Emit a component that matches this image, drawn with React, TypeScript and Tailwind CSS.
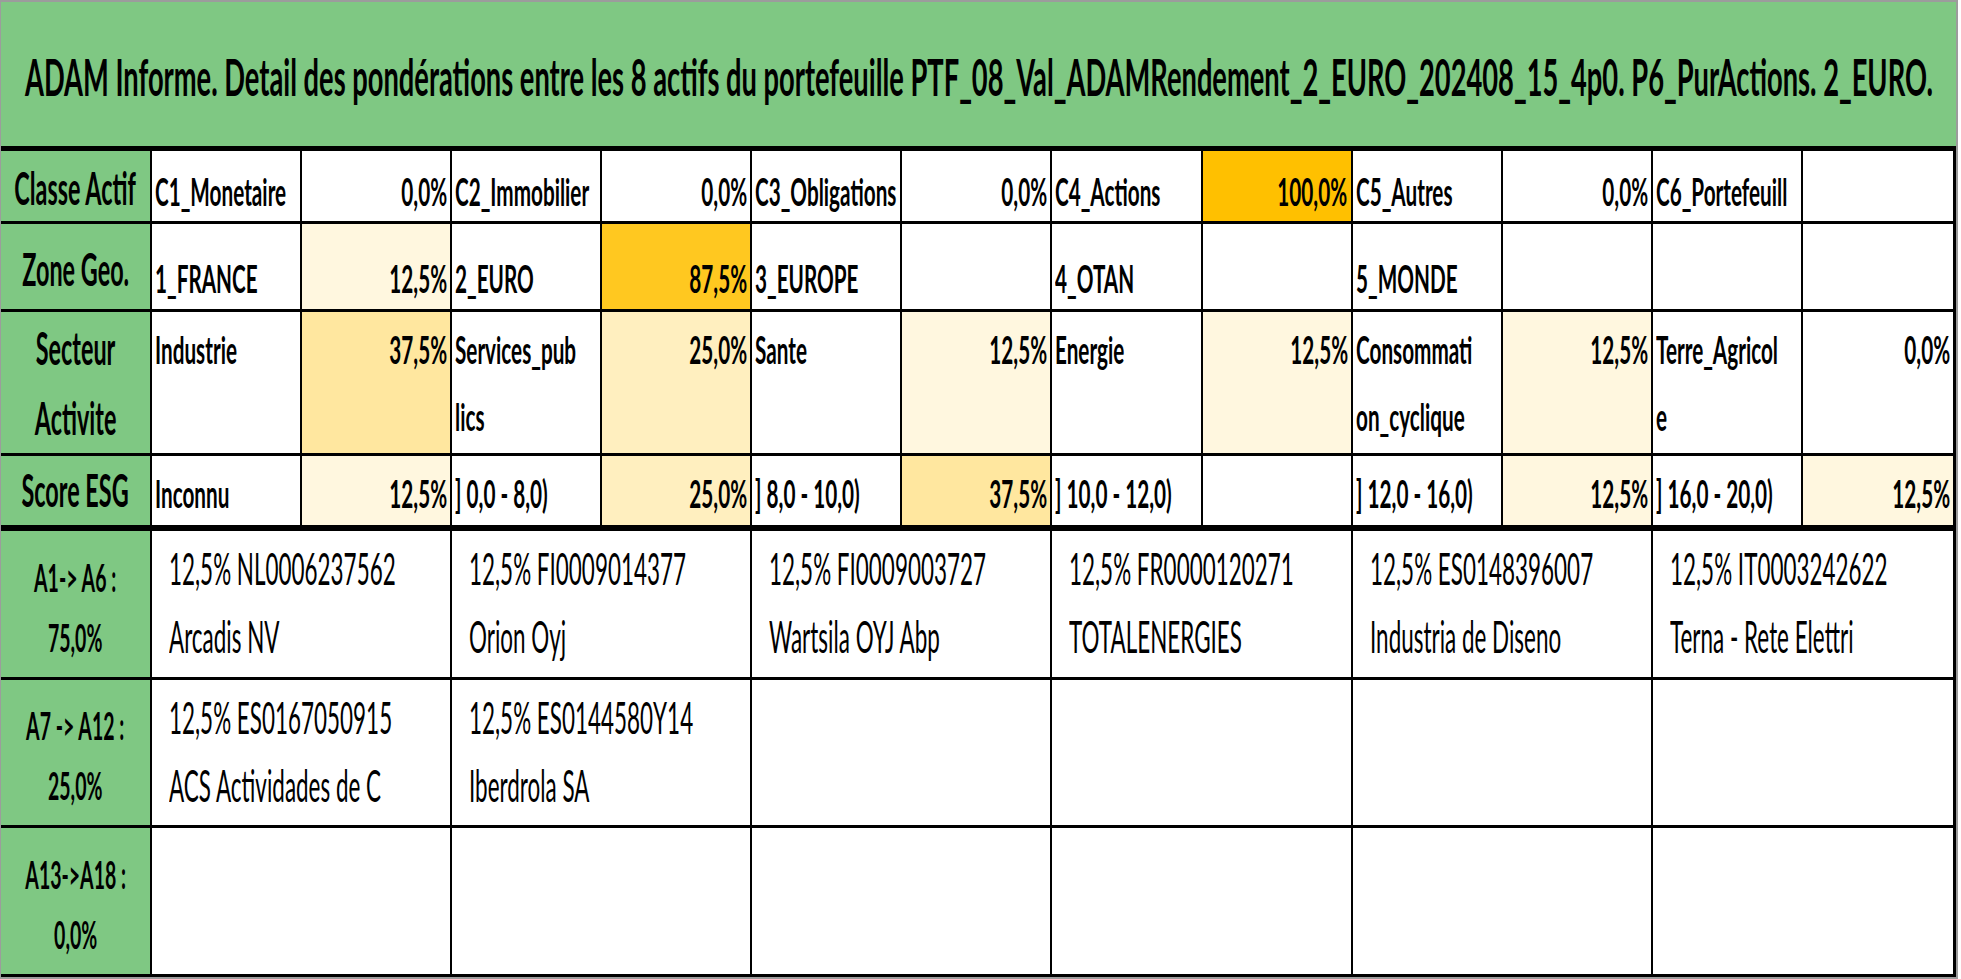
import React from 'react';

type Origin = 'l' | 'r' | 'c';

function Sq({ children, o, s }: { children: React.ReactNode; o: Origin; s: string }) {
  const origin = o === 'l' ? 'origin-left' : o === 'r' ? 'origin-right' : 'origin-center';
  return <span className={`inline-block whitespace-nowrap ${origin} ${s}`}>{children}</span>;
}

const TITLE_S = 'scale-x-[0.535]';
const LABEL_S = 'scale-x-[0.52]';
const VAL_S = 'scale-x-[0.545]';
const BOT_S = 'scale-x-[0.51]';
const BLAB_S = 'scale-x-[0.5]';

type Pair = { name: string[]; value: string; bg: string; clip?: boolean };

type TopRow = {
  label: string[];
  rowCls: string;
  cellCls: string;
  labelCls: string;
  pairs: Pair[];
};

const W = 'bg-white';
const P12 = 'bg-[#fff7df]';
const P25 = 'bg-[#ffefbf]';
const P37 = 'bg-[#ffe79f]';
const P87 = 'bg-[#ffc820]';
const P100 = 'bg-[#ffc000]';

const topRows: TopRow[] = [
  {
    label: ['Classe Actif'],
    rowCls: 'h-[73px] border-b-[3px]',
    cellCls: 'items-end pb-[11px] leading-none',
    labelCls: 'items-end pb-[10px] leading-none',
    pairs: [
      { name: ['C1_Monetaire'], value: '0,0%', bg: W },
      { name: ['C2_Immobilier'], value: '0,0%', bg: W },
      { name: ['C3_Obligations'], value: '0,0%', bg: W },
      { name: ['C4_Actions'], value: '100,0%', bg: P100 },
      { name: ['C5_Autres'], value: '0,0%', bg: W },
      { name: ['C6_Portefeuill'], value: '', bg: W, clip: true },
    ],
  },
  {
    label: ['Zone Geo.'],
    rowCls: 'h-[88px] border-b-[3px]',
    cellCls: 'items-end pb-[12px] leading-none',
    labelCls: 'items-end pb-[17px] leading-none',
    pairs: [
      { name: ['1_FRANCE'], value: '12,5%', bg: P12 },
      { name: ['2_EURO'], value: '87,5%', bg: P87 },
      { name: ['3_EUROPE'], value: '', bg: W },
      { name: ['4_OTAN'], value: '', bg: W },
      { name: ['5_MONDE'], value: '', bg: W },
      { name: [], value: '', bg: W },
    ],
  },
  {
    label: ['Secteur', 'Activite'],
    rowCls: 'h-[144px] border-b-[3px]',
    cellCls: 'items-start pt-[4px] leading-[67px]',
    labelCls: 'items-start pt-[1px] leading-[70px]',
    pairs: [
      { name: ['Industrie'], value: '37,5%', bg: P37 },
      { name: ['Services_pub', 'lics'], value: '25,0%', bg: P25 },
      { name: ['Sante'], value: '12,5%', bg: P12 },
      { name: ['Energie'], value: '12,5%', bg: P12 },
      { name: ['Consommati', 'on_cyclique'], value: '12,5%', bg: P12 },
      { name: ['Terre_Agricol', 'e'], value: '0,0%', bg: W },
    ],
  },
  {
    label: ['Score ESG'],
    rowCls: 'h-[75px] border-b-[6px]',
    cellCls: 'items-end pb-[13px] leading-none',
    labelCls: 'items-end pb-[12px] leading-none',
    pairs: [
      { name: ['Inconnu'], value: '12,5%', bg: P12 },
      { name: ['] 0,0 - 8,0)'], value: '25,0%', bg: P25 },
      { name: ['] 8,0 - 10,0)'], value: '37,5%', bg: P37 },
      { name: ['] 10,0 - 12,0)'], value: '', bg: W },
      { name: ['] 12,0 - 16,0)'], value: '12,5%', bg: P12 },
      { name: ['] 16,0 - 20,0)'], value: '12,5%', bg: P12 },
    ],
  },
];

type BotRow = { label: string[]; rowCls: string; cells: string[][] };

const botRows: BotRow[] = [
  {
    label: ['A1-> A6 :', '75,0%'],
    rowCls: 'h-[149px]',
    cells: [
      ['12,5% NL0006237562', 'Arcadis NV'],
      ['12,5% FI0009014377', 'Orion Oyj'],
      ['12,5% FI0009003727', 'Wartsila OYJ Abp'],
      ['12,5% FR0000120271', 'TOTALENERGIES'],
      ['12,5% ES0148396007', 'Industria de Diseno'],
      ['12,5% IT0003242622', 'Terna - Rete Elettri'],
    ],
  },
  {
    label: ['A7 -> A12 :', '25,0%'],
    rowCls: 'h-[148px]',
    cells: [
      ['12,5% ES0167050915', 'ACS Actividades de C'],
      ['12,5% ES0144580Y14', 'Iberdrola SA'],
      [],
      [],
      [],
      [],
    ],
  },
  {
    label: ['A13->A18 :', '0,0%'],
    rowCls: 'h-[149px]',
    cells: [[], [], [], [], [], []],
  },
];

function Lines({ lines }: { lines: string[] }) {
  return (
    <>
      {lines.map((l, i) => (
        <span key={i} className="block">
          {l}
        </span>
      ))}
    </>
  );
}

export default function App() {
  return (
    <div className="w-[1961px] h-[979px] overflow-hidden bg-white font-['Lato',sans-serif] text-black">
      <div className="w-[1958px] h-[979px] border-t-2 border-l border-r-2 border-b-2 border-[#9c9c9c] flex flex-col">
        {/* Title */}
        <div className="h-[149px] shrink-0 overflow-hidden bg-[#7fc883] border-b-[5px] border-black flex items-center pl-[24px] pt-[4px]">
          <div className="text-[51px] font-bold leading-none">
            <Sq o="l" s={TITLE_S}>
              ADAM Informe. Detail des pondérations entre les 8 actifs du portefeuille PTF_08_Val_ADAMRendement_2_EURO_202408_15_4p0. P6_PurActions. 2_EURO.
            </Sq>
          </div>
        </div>

        {/* Top section */}
        {topRows.map((row, ri) => (
          <div
            key={ri}
            className={`shrink-0 grid grid-cols-[151px_repeat(12,minmax(0,1fr))] grid-rows-1 border-r-[3px] border-black ${row.rowCls}`}
          >
            <div
              className={`bg-[#7fc883] border-r-2 border-black flex justify-center text-center text-[45px] font-bold ${row.labelCls}`}
            >
              <Sq o="c" s={LABEL_S}>
                <Lines lines={row.label} />
              </Sq>
            </div>
            {row.pairs.map((p, pi) => (
              <React.Fragment key={pi}>
                <div
                  className={`bg-white border-r-2 border-black flex justify-start pl-[3px] text-[38px] font-bold ${
                    p.clip ? 'overflow-hidden' : ''
                  } ${row.cellCls}`}
                >
                  {p.name.length > 0 && (
                    <Sq o="l" s={VAL_S}>
                      <Lines lines={p.name} />
                    </Sq>
                  )}
                </div>
                <div
                  className={`${p.bg} ${
                    pi === row.pairs.length - 1 ? '' : 'border-r-2'
                  } border-black flex justify-end pr-[3px] text-[38px] font-bold ${row.cellCls}`}
                >
                  {p.value && (
                    <Sq o="r" s={VAL_S}>
                      {p.value}
                    </Sq>
                  )}
                </div>
              </React.Fragment>
            ))}
          </div>
        ))}

        {/* Bottom section */}
        {botRows.map((row, ri) => (
          <div
            key={ri}
            className={`shrink-0 grid grid-cols-[151px_repeat(6,minmax(0,1fr))] grid-rows-1 border-r-[3px] border-b-[3px] border-black ${row.rowCls}`}
          >
            <div className="bg-[#7fc883] border-r-2 border-black flex items-center justify-center text-center pt-[5px] text-[39px] font-bold leading-[60px]">
              <Sq o="c" s={BLAB_S}>
                <Lines lines={row.label} />
              </Sq>
            </div>
            {row.cells.map((c, ci) => (
              <div
                key={ci}
                className={`bg-white ${
                  ci === row.cells.length - 1 ? '' : 'border-r-2'
                } border-black flex items-start justify-start pl-[17px] pt-[3px] text-[44px] font-normal leading-[68px]`}
              >
                {c.length > 0 && (
                  <Sq o="l" s={BOT_S}>
                    <Lines lines={c} />
                  </Sq>
                )}
              </div>
            ))}
          </div>
        ))}
      </div>
    </div>
  );
}
